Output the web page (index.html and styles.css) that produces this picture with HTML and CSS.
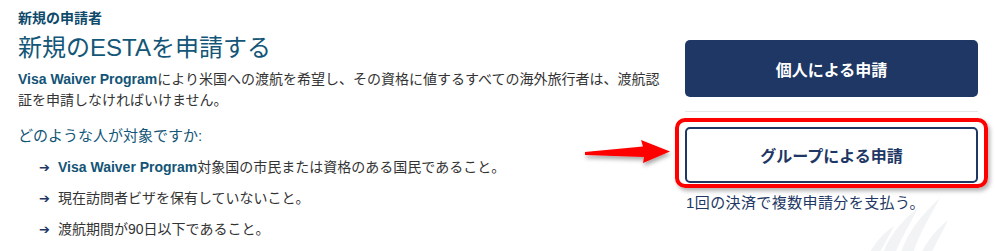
FILE: index.html
```html
<!DOCTYPE html>
<html lang="ja">
<head>
<meta charset="utf-8">
<link rel="stylesheet" href="styles.css">
</head>
<body>
<div class="page">
  <section class="main">
    <div class="eyebrow">新規の申請者</div>
    <h1 class="title">新規のESTAを申請する</h1>
    <p class="lead"><strong>Visa Waiver Program</strong>により米国への渡航を希望し、その資格に値するすべての海外旅行者は、渡航認証を申請しなければいけません。</p>
    <h2 class="question">どのような人が対象ですか:</h2>
    <ul class="reqs">
      <li><span class="bullet">➔</span><span><strong>Visa Waiver Program</strong>対象国の市民または資格のある国民であること。</span></li>
      <li><span class="bullet">➔</span><span>現在訪問者ビザを保有していないこと。</span></li>
      <li><span class="bullet">➔</span><span>渡航期間が90日以下であること。</span></li>
    </ul>
  </section>
  <aside class="side">
    <button class="btn btn-solid">個人による申請</button>
    <hr class="divider">
    <button class="btn btn-outline">グループによる申請</button>
    <p class="note">1回の決済で複数申請分を支払う。</p>
  </aside>
</div>

<svg class="watermark" width="90" height="70" viewBox="0 0 90 70" aria-hidden="true">
  <g fill="#f1f3f5">
    <path d="M40 70 C45 50 60 30 80 12 C70 30 58 50 52 70 Z"/>
    <path d="M22 70 C28 52 40 36 58 22 C50 38 40 54 34 70 Z"/>
    <path d="M8 70 C14 58 22 48 34 40 C28 52 22 62 18 70 Z"/>
    <path d="M60 70 C66 56 76 44 88 34 C82 48 74 60 70 70 Z"/>
  </g>
</svg>

<div class="highlight" aria-hidden="true"></div>

<svg class="pointer" width="100" height="45" viewBox="0 0 100 45" aria-hidden="true">
  <defs>
    <filter id="sh" x="-20%" y="-40%" width="140%" height="200%">
      <feDropShadow dx="1" dy="3" stdDeviation="2" flood-color="#000" flood-opacity="0.35"/>
    </filter>
  </defs>
  <polygon filter="url(#sh)" fill="#ff0000" points="5,22 63,16.5 61,10 90,21.5 63,33 64,27 5,25"/>
</svg>
</body>
</html>
```

FILE: styles.css
```css
html, body {
  margin: 0;
  padding: 0;
  background: #ffffff;
}

body {
  width: 995px;
  height: 251px;
  overflow: hidden;
  position: relative;
  font-family: "Liberation Sans", "Noto Sans CJK JP", sans-serif;
  color: #333333;
}

.page {
  display: flex;
  align-items: flex-start;
}

.main {
  width: 642px;
  padding: 8px 0 0 18px;
}

.eyebrow {
  font-size: 14px;
  font-weight: bold;
  line-height: 20px;
  color: #0e4a6b;
}

.title {
  margin: 4px 0 0;
  font-size: 24px;
  font-weight: normal;
  line-height: 32px;
  color: #135677;
}

.lead {
  margin: 5px 0 0;
  font-size: 14px;
  line-height: 21px;
  color: #333333;
}

.lead strong,
.reqs strong {
  color: #125476;
}

.question {
  margin: 14px 0 0;
  font-size: 15px;
  font-weight: normal;
  line-height: 22px;
  color: #135677;
}

.reqs {
  list-style: none;
  margin: 10px 0 0;
  padding: 0 0 0 21px;
}

.reqs li {
  display: flex;
  gap: 7px;
  font-size: 14px;
  line-height: 21px;
  margin-bottom: 10px;
}

.bullet {
  width: 12px;
  font-size: 13px;
  color: #1e3764;
  font-family: "DejaVu Sans", sans-serif;
}

.side {
  margin-left: 25px;
  width: 293px;
  padding-top: 40px;
  display: flex;
  flex-direction: column;
}

.btn {
  font-family: "Liberation Sans", "Noto Sans CJK JP", sans-serif;
  font-size: 16px;
  font-weight: bold;
  border-radius: 5px;
  cursor: pointer;
  padding: 0;
}

.btn-solid {
  height: 57px;
  background: #1e3764;
  color: #ffffff;
  border: none;
}

.divider {
  margin: 14px 0 0;
  border: none;
  border-top: 1px solid #e6e6e6;
  height: 0;
}

.btn-outline {
  margin-top: 15px;
  height: 56px;
  background: #ffffff;
  color: #1e3764;
  border: 2px solid #1e3764;
}

.note {
  margin: 10px 0 0 1px;
  font-size: 15px;
  line-height: 20px;
  letter-spacing: 0.4px;
  color: #1e3764;
}

.highlight {
  position: absolute;
  left: 675px;
  top: 118px;
  width: 305px;
  height: 62px;
  border: 4px solid #ff0000;
  border-radius: 10px;
  box-shadow: 2px 3px 4px rgba(0, 0, 0, 0.3);
}

.pointer {
  position: absolute;
  left: 580px;
  top: 130px;
}

.watermark {
  position: absolute;
  left: 860px;
  top: 186px;
}
```
